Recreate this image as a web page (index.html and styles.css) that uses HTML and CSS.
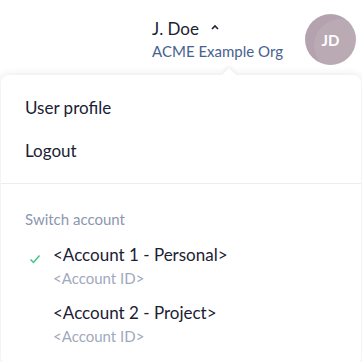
FILE: index.html
```html
<!DOCTYPE html>
<html>
<head>
<meta charset="utf-8">
<link rel="stylesheet" href="styles.css">
</head>
<body>
<header class="header">
  <div class="user">
    <div class="name-row"><span class="name">J. Doe</span><svg class="caret" width="8" height="6" viewBox="0 0 8 6"><path d="M1 5 L4 2 L7 5" fill="none" stroke="#1d2433" stroke-width="1.6"/></svg></div>
    <div class="org">ACME Example Org</div>
  </div>
  <div class="avatar">JD</div>
</header>
<div class="menu">
  <div class="section">
    <div class="item">User profile</div>
    <div class="item">Logout</div>
  </div>
  <div class="section switch">
    <div class="label">Switch account</div>
    <div class="account">
      <span class="check"><svg width="12" height="10" viewBox="0 0 12 10"><path d="M1.5 5.5 L4.5 8.5 L10.5 1.5" fill="none" stroke="#3cc68a" stroke-width="1.5"/></svg></span>
      <div class="acc-text">
        <div class="acc-name">&lt;Account 1 - Personal&gt;</div>
        <div class="acc-id">&lt;Account ID&gt;</div>
      </div>
    </div>
    <div class="account">
      <span class="check"></span>
      <div class="acc-text">
        <div class="acc-name">&lt;Account 2 - Project&gt;</div>
        <div class="acc-id">&lt;Account ID&gt;</div>
      </div>
    </div>
  </div>
</div>
</body>
</html>
```
FILE: styles.css
```css
* { box-sizing: border-box; }
html, body { margin: 0; padding: 0; background: #fff; }
body {
  font-family: "Lato", "Noto Sans", sans-serif;
  color: #1a2133;
  width: 362px;
  height: 362px;
  overflow: hidden;
}
.header {
  display: flex;
  justify-content: flex-end;
  align-items: flex-start;
  height: 75px;
  padding: 14px 6px 0 0;
}
.user {
  margin-right: 22px;
  padding-top: 3px;
}
.name-row {
  display: flex;
  align-items: center;
  gap: 12px;
  height: 22px;
}
.name { font-size: 17px; }
.caret { margin-top: -3px; }
.org {
  font-size: 15px;
  color: #47628f;
  margin-top: 3px;
}
.avatar {
  width: 51px;
  height: 51px;
  border-radius: 50%;
  background: radial-gradient(circle at 70% 62%, #baaab4 0 55%, #b4a3ae 56%);
  color: #fff;
  font-weight: 700;
  font-size: 15px;
  display: flex;
  align-items: center;
  justify-content: center;
}
.menu {
  position: relative;
  margin: 0 1px;
  background: #fff;
  border-radius: 8px;
  box-shadow: 0 0 8px rgba(30, 40, 60, 0.12);
  height: 290px;
}
.menu::before {
  content: "";
  position: absolute;
  top: -5px;
  left: 223px;
  width: 10px;
  height: 10px;
  background: #fff;
  transform: rotate(45deg);
  box-shadow: -2px -2px 4px rgba(30, 40, 60, 0.06);
}
.section {
  position: relative;
  padding: 20px 24px 0;
}
.section:first-child {
  padding-top: 22px;
  padding-bottom: 21px;
  border-bottom: 1px solid #ebedf3;
}
.item {
  font-size: 17px;
  line-height: 22px;
  margin-bottom: 21px;
}
.item:last-child { margin-bottom: 0; }
.switch { padding-top: 25px; }
.label {
  font-size: 15px;
  color: #8c97b0;
  line-height: 20px;
  margin-bottom: 15px;
}
.account {
  display: flex;
  align-items: flex-start;
  margin-bottom: 14px;
}
.check {
  width: 28px;
  padding: 4px 0 0 4px;
  flex: none;
}
.acc-name {
  font-size: 17px;
  line-height: 22px;
}
.acc-id {
  font-size: 15px;
  line-height: 20px;
  color: #a0a9bd;
  margin-top: 2px;
}
```
